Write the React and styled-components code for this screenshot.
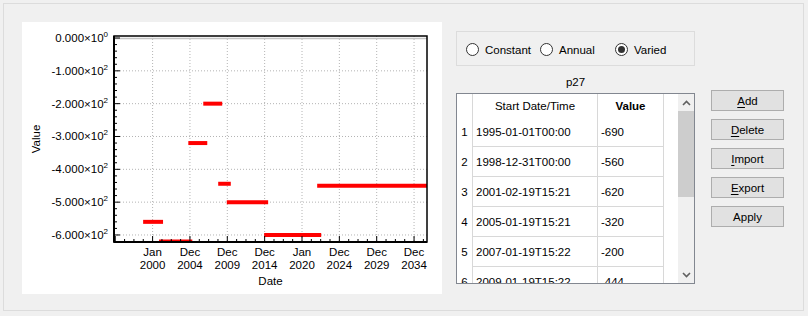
import styled, { createGlobalStyle } from "styled-components";

const GlobalStyle = createGlobalStyle`
  html, body { margin: 0; padding: 0; background: #f0f0f0; }
  body {
    width: 808px;
    height: 316px;
    overflow: hidden;
    font-family: "Liberation Sans", Arial, sans-serif;
    font-size: 11.5px;
    color: #000;
  }
`;

// plot geometry (inside the white panel)
const L = 92, R = 405, T = 14, B = 220;
const X0 = 130.6, STEP = 37.35, YR = STEP / 5;
const Y0 = 16, PER = 0.3283;
const xOf = (yr) => X0 + (yr - 2000) * YR;
const yOf = (v) => Y0 + -v * PER;

const xTicks = [
  ["Jan", "2000"], ["Dec", "2004"], ["Dec", "2009"], ["Dec", "2014"],
  ["Jan", "2020"], ["Dec", "2024"], ["Dec", "2029"], ["Dec", "2034"],
];
const yTicks = [0, 1, 2, 3, 4, 5, 6];

const segments = [
  [1999.0, 2001.13, -560],
  [2001.13, 2005.05, -620],
  [2005.05, 2007.05, -320],
  [2007.05, 2009.05, -200],
  [2009.05, 2010.2, -444],
  [2010.2, 2015.2, -500],
  [2015.2, 2022.3, -600],
  [2022.3, 2040, -450],
];

const rows = [
  ["1995-01-01T00:00", "-690"],
  ["1998-12-31T00:00", "-560"],
  ["2001-02-19T15:21", "-620"],
  ["2005-01-19T15:21", "-320"],
  ["2007-01-19T15:22", "-200"],
  ["2009-01-19T15:22", "-444"],
];

const Frame = styled.div`
  margin: 3px;
  width: 801px;
  height: 308px;
  box-sizing: border-box;
  border: 1px solid #dcdcdc;
  padding: 18px 0 0 18px;
  display: flex;
  align-items: flex-start;
`;

const PlotPanel = styled.div`
  width: 420px;
  height: 272px;
  background: #fff;
  flex: none;
  svg { display: block; }
  text { font-family: "Liberation Sans", Arial, sans-serif; font-size: 11.5px; fill: #000; }
`;

const Side = styled.div`
  margin: 9px 0 0 14px;
  width: 239px;
  display: flex;
  flex-direction: column;
`;

const RadioBox = styled.div`
  height: 35px;
  box-sizing: border-box;
  border: 1px solid #dcdcdc;
  display: grid;
  grid-template-columns: 74px 75px 75px;
  align-items: center;
  padding: 2px 0 0 9px;
`;

const RadioItem = styled.label`
  display: flex;
  align-items: center;
  gap: 6px;
`;

const RadioCircle = styled.span`
  width: 13px;
  height: 13px;
  box-sizing: border-box;
  border: 1px solid #333;
  border-radius: 50%;
  background: #fff;
  display: flex;
  align-items: center;
  justify-content: center;
  &::after {
    content: "";
    width: 7px;
    height: 7px;
    border-radius: 50%;
    background: ${(p) => (p.$checked ? "#333" : "transparent")};
  }
`;

const Caption = styled.div`
  text-align: center;
  padding-top: 8px;
  height: 19px;
  line-height: 16px;
`;

const TableBox = styled.div`
  height: 191px;
  box-sizing: border-box;
  border: 1px solid #828790;
  background: #fff;
  display: flex;
  overflow: hidden;
`;

const Cells = styled.div`
  flex: 1;
  overflow: hidden;
`;

const Row = styled.div`
  display: grid;
  grid-template-columns: 16px 125px 66px 14px;
  height: ${(p) => (p.$head ? 23 : 30)}px;
`;

const Cell = styled.div`
  box-sizing: border-box;
  display: flex;
  align-items: center;
  justify-content: ${(p) => (p.$center ? "center" : "flex-start")};
  padding-left: ${(p) => (p.$center ? 0 : 3)}px;
  border-right: ${(p) => (p.$last ? "none" : "1px solid #d8d8d8")};
  border-bottom: ${(p) => (p.$line ? "1px solid #d8d8d8" : "none")};
  font-weight: ${(p) => (p.$bold ? "bold" : "normal")};
  white-space: nowrap;
`;

const Scrollbar = styled.div`
  width: 16px;
  flex: none;
  background: #f0f0f0;
  display: flex;
  flex-direction: column;
`;

const Arrow = styled.div`
  height: 17px;
  flex: none;
  display: flex;
  align-items: center;
  justify-content: center;
  margin-top: ${(p) => (p.$down ? "auto" : "0")};
`;

const Thumb = styled.div`
  height: 86px;
  background: #cdcdcd;
`;

const Buttons = styled.div`
  margin: 68px 0 0 16px;
  display: flex;
  flex-direction: column;
  gap: 8px;
`;

const Button = styled.button`
  width: 73px;
  height: 21px;
  box-sizing: border-box;
  border: 1px solid #adadad;
  background: #e1e1e1;
  font-family: inherit;
  font-size: 11.5px;
  color: #000;
  padding: 0;
  u { text-decoration-thickness: 1px; text-underline-offset: 2px; }
`;

const Chevron = ({ down }) => (
  <svg width="9" height="6" viewBox="0 0 9 6">
    <polyline
      points={down ? "1,1 4.5,4.5 8,1" : "1,5 4.5,1.5 8,5"}
      fill="none"
      stroke="#606060"
      strokeWidth="1.6"
    />
  </svg>
);

function Plot() {
  const minorX = [];
  for (let k = -8; k < 40; k++) {
    const x = X0 + (k * STEP) / 4;
    if (x > L + 1 && x < R - 1) minorX.push({ x, major: k % 4 === 0 });
  }
  const minorY = [];
  for (let k = 0; k < 40; k++) {
    const y = Y0 + k * 20 * PER;
    if (y < B - 1) minorY.push({ y, major: k % 5 === 0 });
  }
  return (
    <svg width="420" height="272">
      <defs>
        <clipPath id="area">
          <rect x={L} y={T} width={R - L} height={B - T} />
        </clipPath>
      </defs>
      {xTicks.map((_, i) => (
        <line key={"gx" + i} x1={X0 + i * STEP} x2={X0 + i * STEP} y1={T} y2={B}
          stroke="#b4b4b4" strokeDasharray="1 2" />
      ))}
      {yTicks.slice(1).map((i) => (
        <line key={"gy" + i} x1={L} x2={R} y1={yOf(-i * 100)} y2={yOf(-i * 100)}
          stroke="#b4b4b4" strokeDasharray="1 2" />
      ))}
      <line x1={L} x2={R} y1={Y0 + 0.5} y2={Y0 + 0.5} stroke="#c4c4c4" strokeWidth="1.5" />
      <g clipPath="url(#area)">
        {segments.map(([a, b, v], i) => (
          <line key={"s" + i} x1={xOf(a)} x2={xOf(b)} y1={yOf(v)} y2={yOf(v)}
            stroke="#ff0000" strokeWidth="4" strokeLinecap="square" />
        ))}
      </g>
      {minorX.map(({ x, major }, i) => (
        <line key={"tx" + i} x1={x} x2={x} y1={B} y2={B - (major ? 6 : 3)} stroke="#000" />
      ))}
      {minorY.map(({ y, major }, i) => (
        <line key={"ty" + i} x1={L} x2={L + (major ? 6 : 3)} y1={y} y2={y} stroke="#000" />
      ))}
      <rect x={L} y={T} width={R - L} height={B - T} fill="none" stroke="#000" strokeWidth="1.5" />
      <line x1={L} x2={L} y1={T} y2={B + 0.5} stroke="#000" strokeWidth="2" />
      <line x1={L} x2={R} y1={B} y2={B} stroke="#000" strokeWidth="2" />
      {yTicks.map((i) => (
        <text key={"ly" + i} x={86} y={yOf(-i * 100) + 4} textAnchor="end">
          {i === 0 ? "0.000×10" : `-${i}.000×10`}
          <tspan dy="-5" fontSize="8">{i === 0 ? "0" : "2"}</tspan>
        </text>
      ))}
      {xTicks.map(([m, y], i) => (
        <text key={"lx" + i} x={X0 + i * STEP} y={234} textAnchor="middle">
          <tspan x={X0 + i * STEP}>{m}</tspan>
          <tspan x={X0 + i * STEP} dy="13">{y}</tspan>
        </text>
      ))}
      <text x={(L + R) / 2} y={263} textAnchor="middle">Date</text>
      <text transform="translate(18 117) rotate(-90)" textAnchor="middle">Value</text>
    </svg>
  );
}

export default function App() {
  return (
    <>
      <GlobalStyle />
      <Frame>
        <PlotPanel>
          <Plot />
        </PlotPanel>
        <Side>
          <RadioBox>
            <RadioItem><RadioCircle />Constant</RadioItem>
            <RadioItem><RadioCircle />Annual</RadioItem>
            <RadioItem><RadioCircle $checked />Varied</RadioItem>
          </RadioBox>
          <Caption>p27</Caption>
          <TableBox>
            <Cells>
              <Row $head>
                <Cell $center />
                <Cell $center>Start Date/Time</Cell>
                <Cell $center $bold>Value</Cell>
                <Cell $last />
              </Row>
              {rows.map(([d, v], i) => (
                <Row key={i}>
                  <Cell $center>{i + 1}</Cell>
                  <Cell $line>{d}</Cell>
                  <Cell $line>{v}</Cell>
                  <Cell $last />
                </Row>
              ))}
            </Cells>
            <Scrollbar>
              <Arrow><Chevron /></Arrow>
              <Thumb />
              <Arrow $down><Chevron down /></Arrow>
            </Scrollbar>
          </TableBox>
        </Side>
        <Buttons>
          <Button><u>A</u>dd</Button>
          <Button><u>D</u>elete</Button>
          <Button><u>I</u>mport</Button>
          <Button><u>E</u>xport</Button>
          <Button>Apply</Button>
        </Buttons>
      </Frame>
    </>
  );
}
